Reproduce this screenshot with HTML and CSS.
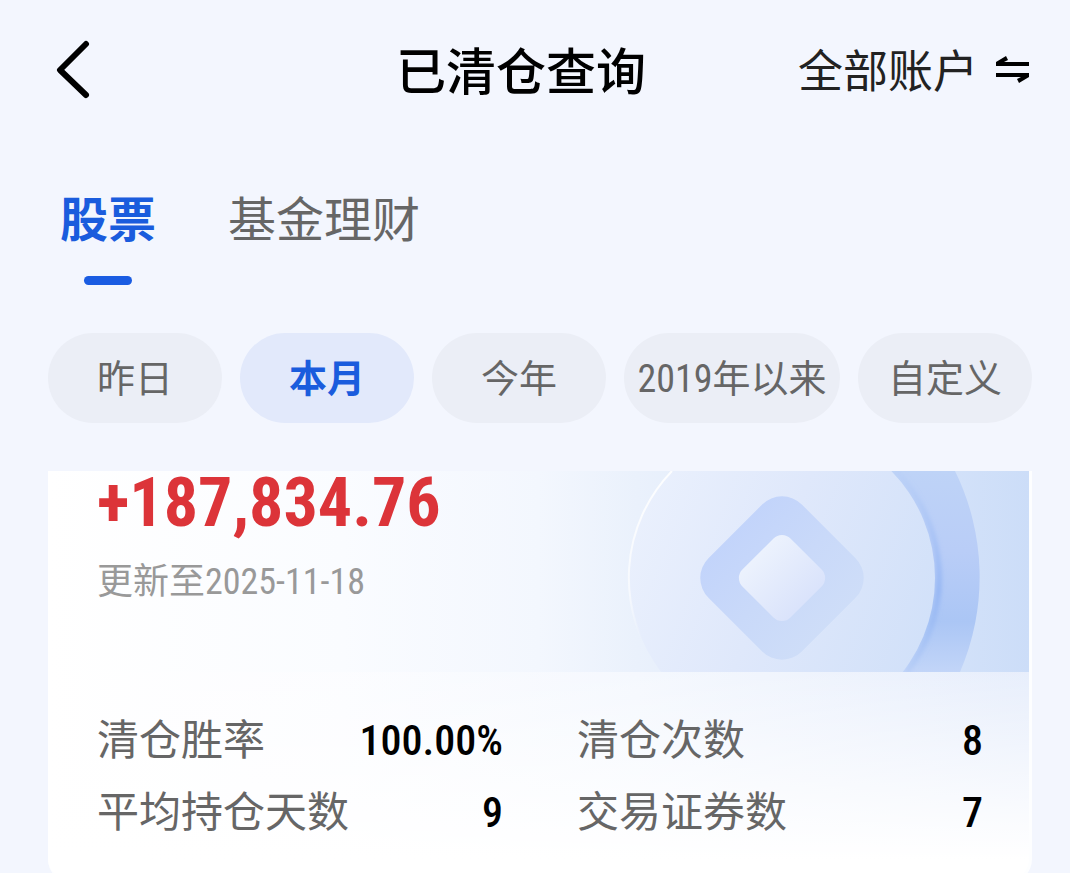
FILE: index.html
```html
<!doctype html>
<html lang="zh-CN">
<head>
	<meta charset="UTF-8" />
	<meta name="viewport" content="width=device-width, initial-scale=1" />
	<title>已清仓查询</title>
	<link rel="stylesheet" href="styles.css">
</head>
<body>
	<div class="page">
		<header class="header">
			<button type="button" class="back" aria-label="返回">
				<svg width="36" height="60" viewBox="0 0 36 60" fill="none" stroke="#000" stroke-width="6" stroke-linecap="round" stroke-linejoin="round">
					<path d="M32 4L6 30L32 55" />
				</svg>
			</button>
			<h1>已清仓查询</h1>
			<button type="button" class="account">
				<span>全部账户</span>
				<svg width="34" height="28" viewBox="0 0 34 28">
					<path d="M0 6L10 0L12 4L8 6H33V10H0Z" />
					<path d="M0 17H33V21L23 27L21 23L25 21H0Z" />
				</svg>
			</button>
		</header>

		<nav class="tabs">
			<a href="#stock" class="active">股票</a>
			<a href="#fund">基金理财</a>
		</nav>

		<div class="range">
			<button type="button">昨日</button>
			<button type="button" class="active">本月</button>
			<button type="button">今年</button>
			<button type="button">2019年以来</button>
			<button type="button">自定义</button>
		</div>

		<main class="card">
			<section class="banner">
				<svg class="coin" width="509" height="201" viewBox="0 0 509 201" aria-hidden="true">
					<defs>
						<linearGradient id="rim" x1="0" y1="0" x2="0" y2="1">
							<stop offset="0" stop-color="#bed3f7" />
							<stop offset="0.4" stop-color="#b9cdf7" />
							<stop offset="0.75" stop-color="#abc6f5" />
							<stop offset="1" stop-color="#c2d5f8" />
						</linearGradient>
						<linearGradient id="face" x1="0" y1="0.2" x2="1" y2="0.6">
							<stop offset="0" stop-color="#ebf1fd" />
							<stop offset="0.5" stop-color="#dfe8fb" />
							<stop offset="1" stop-color="#d2e1f9" />
						</linearGradient>
						<linearGradient id="hole" gradientUnits="userSpaceOnUse" x1="182" y1="107" x2="342" y2="107">
							<stop offset="0" stop-color="#c1d3fb" />
							<stop offset="0.5" stop-color="#c9d9f9" />
							<stop offset="1" stop-color="#cfdef8" />
						</linearGradient>
						<linearGradient id="core" x1="0" y1="0" x2="1" y2="0">
							<stop offset="0" stop-color="#ecf2fd" />
							<stop offset="1" stop-color="#dae3fb" />
						</linearGradient>
						<linearGradient id="edge" x1="0" y1="0" x2="0" y2="1">
							<stop offset="0" stop-color="#fff" stop-opacity="0.9" />
							<stop offset="0.6" stop-color="#fff" stop-opacity="0.6" />
							<stop offset="0.85" stop-color="#fff" stop-opacity="0" />
						</linearGradient>
						<linearGradient id="shade" x1="0" y1="0" x2="0" y2="1">
							<stop offset="0" stop-color="#9dbcf4" stop-opacity="0.1" />
							<stop offset="0.6" stop-color="#8fb2f3" stop-opacity="0.9" />
							<stop offset="1" stop-color="#9dbcf4" stop-opacity="0.3" />
						</linearGradient>
						<filter id="soft" x="-20%" y="-5%" width="140%" height="110%">
							<feGaussianBlur stdDeviation="2" />
						</filter>
					</defs>
					<path d="M300 0H435A240 240 0 0 1 440 201H300Z" fill="url(#rim)" />
					<path d="M376 0A154 154 0 0 1 387 201" fill="none" stroke="url(#shade)" stroke-width="5" filter="url(#soft)" />
					<circle cx="262" cy="107" r="153" fill="url(#face)" />
					<path d="M152 0A153 153 0 0 0 140 199" fill="none" stroke="url(#edge)" stroke-width="2" />
					<rect x="196" y="41" width="132" height="132" rx="28" fill="url(#hole)" transform="rotate(45 262 107)" />
					<rect x="228" y="73" width="68" height="68" rx="12" fill="url(#core)" transform="rotate(45 262 107)" />
				</svg>
				<strong class="amount">+187,834.76</strong>
				<p class="updated">更新至2025-11-18</p>
			</section>
			<dl class="stats">
				<div><dt>清仓胜率</dt><dd>100.00%</dd></div>
				<div><dt>清仓次数</dt><dd>8</dd></div>
				<div><dt>平均持仓天数</dt><dd>9</dd></div>
				<div><dt>交易证券数</dt><dd>7</dd></div>
			</dl>
		</main>
	</div>
</body>
</html>
```
FILE: styles.css
```css
*{
	box-sizing: border-box;
}
body,h1,p,dl,dd{
	margin: 0;
	padding: 0;
}
body{
	background: #f3f6fe;
	font-family: "Roboto Condensed", Roboto, "Noto Sans CJK SC", sans-serif;
	color: #000;
}
button{
	padding: 0;
	border: 0;
	background: none;
	font-family: inherit;
	color: inherit;
	cursor: pointer;
}
svg{
	display: block;
}
.page{
	height: 100vh;
	overflow: hidden;
	padding: 0 38px 0 48px;
}

/* 顶部 */
.header{
	display: grid;
	grid-template-columns: 1fr auto 1fr;
	align-items: center;
	height: 140px;
	padding: 0 2px 0 6px;
}
.back{
	justify-self: start;
}
h1{
	padding: 6px 42px 0 0;
	font-size: 50px;
	font-weight: 500;
	line-height: 72px;
}
.account{
	justify-self: end;
	display: flex;
	align-items: center;
	gap: 18px;
	font-size: 45px;
	line-height: 64px;
	color: #222;
}
.account span{
	padding-top: 6px;
}

.tabs{
	display: flex;
	gap: 72px;
	padding: 40px 12px 0;
}
.tabs a{
	display: flex;
	flex-direction: column;
	align-items: center;
	height: 105px;
	font-size: 48px;
	line-height: 82px;
	color: #666;
	text-decoration: none;
}
.tabs a.active{
	font-weight: 700;
	color: #1a5cdd;
}
.tabs a.active::after{
	content: "";
	width: 48px;
	height: 9px;
	margin-top: 14px;
	border-radius: 5px;
	background: #1a5ce2;
}

.range{
	display: grid;
	grid-template-columns: repeat(3, 1fr) 216px 1fr;
	gap: 18px;
	margin-top: 48px;
}
.range button{
	height: 90px;
	padding-bottom: 6px;
	border-radius: 45px;
	background: #ebeef6;
	font-size: 38px;
	color: #666;
}
.range .active{
	background: #e2e9fb;
	font-weight: 700;
	color: #1a5cdd;
}

/* 收益卡片 */
.card{
	margin-top: 48px;
	border: solid #fdfeff;
	border-width: 0 3px 3px 0;
	border-radius: 0 0 24px 24px;
	background: linear-gradient(to top, #fff 5%, rgba(255, 255, 255, 0) 60%), linear-gradient(to right, #fff, #fbfcff 30%, #f3f7fe 60%, #e3ebfb);
}
.banner{
	position: relative;
	height: 201px;
	padding-left: 49px;
	background: linear-gradient(to right, #fff, #fafcff 30%, #f3f7fe 50%, #eaf1fc 60%, #d6e4fa 88%, #ccddf8);
}
.coin{
	position: absolute;
	top: 0;
	right: 0;
}
.amount{
	position: relative;
	display: block;
	font-size: 68px;
	line-height: 64px;
	color: #dc3439;
}
.updated{
	position: relative;
	margin-top: 20px;
	font-size: 36px;
	line-height: 54px;
	color: #999;
}
.stats{
	display: grid;
	grid-template-columns: 1fr 1fr;
	column-gap: 74px;
	padding: 33px 46px 31px 49px;
}
.stats div{
	display: flex;
	justify-content: space-between;
	font-size: 42px;
	line-height: 72px;
}
dt{
	color: #666;
}
dd{
	font-weight: 500;
}
```
